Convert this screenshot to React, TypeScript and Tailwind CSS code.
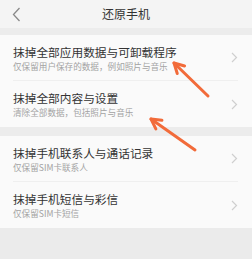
const rowsA = [
  { title: "抹掉全部应用数据与可卸载程序", sub: "仅保留用户保存的数据，例如照片与音乐" },
  { title: "抹掉全部内容与设置", sub: "清除全部数据，包括照片与音乐" },
];

const rowsB = [
  { title: "抹掉手机联系人与通话记录", sub: "仅保留SIM卡联系人" },
  { title: "抹掉手机短信与彩信", sub: "仅保留SIM卡短信" },
];

const Chevron = () => (
  <svg width="7" height="11" viewBox="0 0 7 11" className="shrink-0">
    <path d="M1 1 L5.5 5.5 L1 10" fill="none" stroke="#cfcfcf" strokeWidth="1.2" />
  </svg>
);

const Row = ({ title, sub, last }: { title: string; sub: string; last?: boolean }) => (
  <div className="flex h-[46px] items-center pl-[13px] pr-[14px]">
    <div className={`flex h-full flex-1 items-center ${last ? "" : "border-b border-[#efefef]"}`}>
      <div className="flex flex-1 flex-col">
        <span className="text-[11.7px] leading-[15px] text-[#333333]">{title}</span>
        <span className="mt-[1px] text-[8.6px] leading-[12px] text-[#a3a3a3]">{sub}</span>
      </div>
      <Chevron />
    </div>
  </div>
);

const Arrow = ({ x1, y1, x2, y2 }: { x1: number; y1: number; x2: number; y2: number }) => {
  const a = Math.atan2(y1 - y2, x1 - x2);
  const len = 11;
  const spread = 0.5;
  const p1 = [x1 - len * Math.cos(a - spread), y1 - len * Math.sin(a - spread)];
  const p2 = [x1 - len * Math.cos(a + spread), y1 - len * Math.sin(a + spread)];
  return (
    <g stroke="#f26b3a" strokeWidth="3" strokeLinecap="round" strokeLinejoin="round" fill="none">
      <line x1={x2} y1={y2} x2={x1} y2={y1} />
      <polyline points={`${p1[0]},${p1[1]} ${x1},${y1} ${p2[0]},${p2[1]}`} />
    </g>
  );
};

export default function App() {
  return (
    <div
      className="relative h-[259px] w-[252px] overflow-hidden bg-[#ebebeb]"
      style={{ fontFamily: '"Noto Sans CJK SC", "Noto Sans", sans-serif' }}
    >
      <div className="relative flex h-[28px] items-center justify-center bg-[#f4f4f4]">
        <svg width="9" height="15" viewBox="0 0 9 15" className="absolute left-[12px] top-[7px]">
          <path d="M7.5 1 L1.5 7.5 L7.5 14" fill="none" stroke="#8a8a8a" strokeWidth="1.3" />
        </svg>
        <span className="text-[12px] text-[#333333]">还原手机</span>
      </div>
      <div className="h-[7px] bg-[#ececec]" />
      <div className="bg-[#fafafa]">
        {rowsA.map((r, i) => (
          <Row key={r.title} {...r} last={i === rowsA.length - 1} />
        ))}
      </div>
      <div className="h-[9px] bg-[#ececec]" />
      <div className="bg-[#fafafa]">
        {rowsB.map((r, i) => (
          <Row key={r.title} {...r} last={i === rowsB.length - 1} />
        ))}
      </div>

      <svg className="pointer-events-none absolute left-0 top-0" width="252" height="259">
        <Arrow x1={174} y1={63} x2={208} y2={96} />
        <Arrow x1={151} y1={119} x2={195} y2={150} />
      </svg>
    </div>
  );
}
